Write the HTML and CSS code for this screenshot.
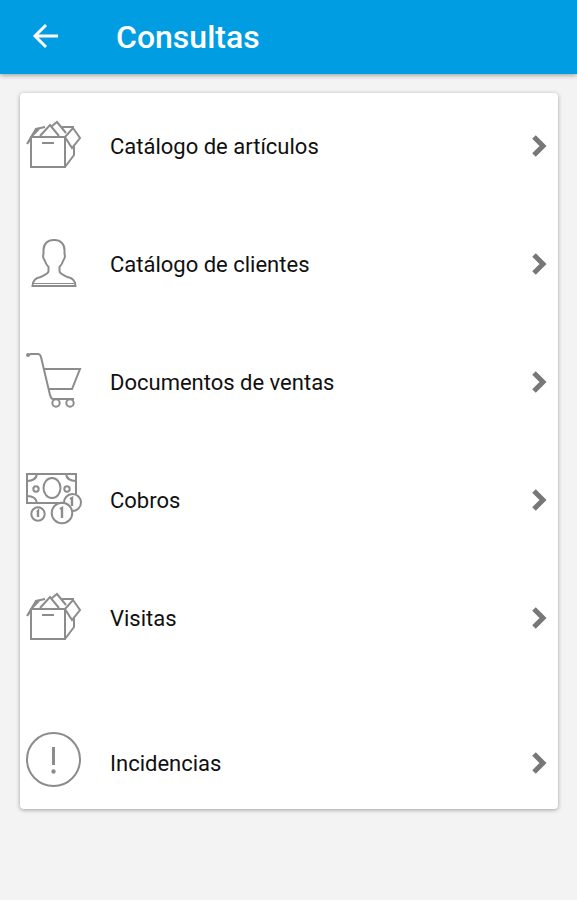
FILE: index.html
```html
<!DOCTYPE html>
<html lang="es">
<head>
<meta charset="utf-8">
<meta name="viewport" content="width=device-width, initial-scale=1">
<title>Consultas</title>
<link rel="stylesheet" href="styles.css">
</head>
<body>
<svg class="symbols" aria-hidden="true">
  <symbol id="box" viewBox="0 0 60 60">
    <path d="M7 21h34v30H7zM7 21l-3 6M3 28l9-15 9-2M7 21l8-8M16 20l10-11 9 11M28 10l5-4 9 11M38 11h12M41 21l8-9 7 10-8 10zM41 51l9-12v-9M18 27h12"/>
  </symbol>
  <symbol id="chevron" viewBox="0 0 16 24">
    <path d="M3 3l9 9-9 9"/>
  </symbol>
</svg>
<header class="bar">
  <button class="back" type="button" aria-label="Volver">
    <svg viewBox="0 0 28 28"><path d="M26 13H3M14 2L3 13l11 11"/></svg>
  </button>
  <h1 class="title">Consultas</h1>
</header>
<main class="content">
  <nav class="card">
    <a class="item" href="#articulos">
      <svg class="icon"><use href="#box"/></svg>
      <span class="label">Catálogo de artículos</span>
      <svg class="chevron"><use href="#chevron"/></svg>
    </a>
    <a class="item" href="#clientes">
      <svg class="icon" viewBox="0 0 60 60"><path d="M29.500 6c-6 0-10 4-10 10v4c-1 2 0 5 1 6 1 3 2 5 4 7v4c0 3-4 4-8 6-5 1-8 3-8 9h43c0-6-3-8-8-9-4-2-8-3-8-6v-4c2-2 3-4 4-7 1-1 2-4 1-6v-4c0-6-4-10-10-10z"/><path class="thin" d="M9 49.500h42"/></svg>
      <span class="label">Catálogo de clientes</span>
      <svg class="chevron"><use href="#chevron"/></svg>
    </a>
    <a class="item" href="#ventas">
      <svg class="icon" viewBox="0 0 60 60"><path d="M4 3l3-1h7q2 0 3 3l9 38q1 4 3 4h21M20 17h36l-8 20H25"/><circle cx="32" cy="51" r="3.700"/><circle cx="46" cy="51" r="3.700"/><circle class="solid" cx="4" cy="3" r="1"/></svg>
      <span class="label">Documentos de ventas</span>
      <svg class="chevron"><use href="#chevron"/></svg>
    </a>
    <a class="item" href="#cobros">
      <svg class="icon" viewBox="0 0 60 60"><path d="M29 33H3V4h49v20M3 11q9 0 10-7M42 4q1 7 10 7M3 26q9 0 10 7"/><ellipse cx="28" cy="18" rx="8.500" ry="10"/><circle cx="12" cy="19" r="2.700"/><circle cx="43" cy="19" r="2.700"/><circle cx="14" cy="44" r="6.700"/><circle cx="38" cy="43" r="10.300"/><path d="M29 33h11a8.500 8.500 0 1 1 8 8"/><path class="numeral" d="M13 42l1-1v6M36 39l2-1v10M46 29l2-1v8"/></svg>
      <span class="label">Cobros</span>
      <svg class="chevron"><use href="#chevron"/></svg>
    </a>
    <a class="item" href="#visitas">
      <svg class="icon"><use href="#box"/></svg>
      <span class="label">Visitas</span>
      <svg class="chevron"><use href="#chevron"/></svg>
    </a>
    <a class="item item-last" href="#incidencias">
      <svg class="icon" viewBox="0 0 60 60"><circle cx="29.500" cy="26.500" r="26.500"/><path class="mark" d="M29.500 14v18"/><circle class="solid" cx="29.500" cy="38.500" r="1.200"/></svg>
      <span class="label">Incidencias</span>
      <svg class="chevron"><use href="#chevron"/></svg>
    </a>
  </nav>
</main>
</body>
</html>
```

FILE: styles.css
```css
* {
  box-sizing: border-box;
}

body {
  margin: 0;
  min-height: 100vh;
  background: #f3f3f3;
  color: #101010;
  font-family: Roboto, "Liberation Sans", sans-serif;
}

svg {
  flex: none;
  fill: none;
  overflow: visible;
}

.symbols {
  display: block;
  width: 0;
  height: 0;
}

.bar {
  display: flex;
  align-items: center;
  gap: 56px;
  height: 74px;
  padding-left: 32px;
  background: #009de3;
  box-shadow: 0 1px 5px rgba(0, 0, 0, 0.4);
}

.back {
  display: flex;
  padding: 0;
  border: 0;
  background: none;
}

.back svg {
  width: 28px;
  height: 28px;
  stroke: #fff;
  stroke-width: 3;
}

.title {
  margin: 0;
  color: #fff;
  font-size: 32px;
  font-weight: 500;
  line-height: 40px;
}

.content {
  padding: 19px 19px 32px 20px;
}

.card {
  display: flex;
  flex-direction: column;
  gap: 12px;
  border-radius: 4px;
  background: #fff;
  box-shadow: 0 1px 4px rgba(0, 0, 0, 0.35);
}

.item {
  display: flex;
  align-items: center;
  min-height: 106px;
  padding: 0 11px 0 4px;
  color: inherit;
  text-decoration: none;
}

.item-last {
  min-height: 92px;
  margin-top: 34px;
}

.icon {
  width: 60px;
  height: 60px;
  stroke: #8c8c8c;
  stroke-width: 2;
}

.label {
  flex: 1;
  padding: 2px 0 0 26px;
  font-size: 22px;
  line-height: 28px;
}

.chevron {
  width: 16px;
  height: 24px;
  stroke: #777;
  stroke-width: 5;
}

.thin {
  stroke-width: 1;
}

.numeral {
  stroke-width: 2.4;
}

.mark {
  stroke-width: 3;
}

.solid {
  fill: #8c8c8c;
}
```
